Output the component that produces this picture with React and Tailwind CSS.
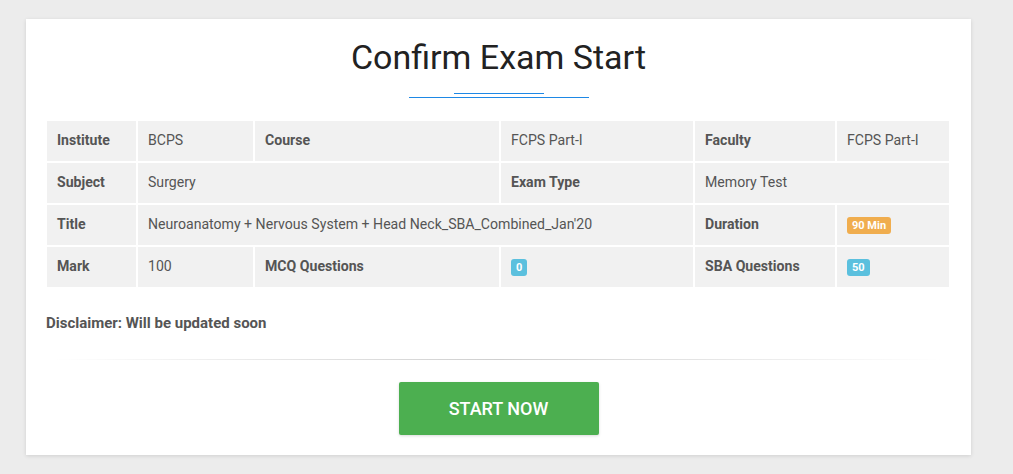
import React from 'react';

const Label = ({ children, ...props }) => (
  <td className="bg-[#f1f1f1] px-[10px] h-[40px] font-bold text-[#555]" {...props}>
    {children}
  </td>
);

const Value = ({ children, ...props }) => (
  <td className="bg-[#f1f1f1] px-[10px] h-[40px] text-[#555]" {...props}>
    {children}
  </td>
);

const Badge = ({ color, children }) => (
  <span className={`inline-block ${color} text-white text-[11px] font-bold leading-[13px] px-[5px] py-[2px] rounded-[3px] align-middle`}>
    {children}
  </span>
);

const App = () => {
  return (
    <div className="min-h-screen bg-[#ececec] pt-[19px] pl-[26px]" style={{ fontFamily: 'Roboto, "Liberation Sans", sans-serif' }}>
      <div className="w-[945px] bg-white shadow-[0_1px_4px_rgba(0,0,0,0.12)] pt-[17px] pb-[20px] px-[19px]">
        {/* Header */}
        <h1 className="text-center text-[34px] leading-[42px] text-[#222]">Confirm Exam Start</h1>
        <div className="flex flex-col items-center mt-[15px]">
          <div className="w-[90px] h-[1px] bg-[#1e88e5]" />
          <div className="w-[180px] h-[1px] bg-[#1e88e5] mt-[3px]" />
        </div>

        {/* Details */}
        <table className="table-fixed border-separate border-spacing-[2px] w-[906px] mt-[21px] text-[14.1px]">
          <colgroup>
            <col className="w-[89px]" />
            <col className="w-[115px]" />
            <col className="w-[244px]" />
            <col className="w-[192px]" />
            <col className="w-[140px]" />
            <col className="w-[112px]" />
          </colgroup>
          <tbody>
            <tr>
              <Label>Institute</Label>
              <Value>BCPS</Value>
              <Label>Course</Label>
              <Value>FCPS Part-I</Value>
              <Label>Faculty</Label>
              <Value>FCPS Part-I</Value>
            </tr>
            <tr>
              <Label>Subject</Label>
              <Value colSpan={2}>Surgery</Value>
              <Label>Exam Type</Label>
              <Value colSpan={2}>Memory Test</Value>
            </tr>
            <tr>
              <Label>Title</Label>
              <Value colSpan={3}>Neuroanatomy + Nervous System + Head Neck_SBA_Combined_Jan'20</Value>
              <Label>Duration</Label>
              <Value><Badge color="bg-[#f0ad4e]">90 Min</Badge></Value>
            </tr>
            <tr>
              <Label>Mark</Label>
              <Value>100</Value>
              <Label>MCQ Questions</Label>
              <Value><Badge color="bg-[#5bc0de]">0</Badge></Value>
              <Label>SBA Questions</Label>
              <Value><Badge color="bg-[#5bc0de]">50</Badge></Value>
            </tr>
          </tbody>
        </table>

        <p className="mt-[24px] pl-px text-[15px] leading-[20px] font-bold text-[#555]">Disclaimer: Will be updated soon</p>

        <div className="mt-[26px] mx-[10px] h-px bg-gradient-to-r from-transparent via-[#cfcfcf] to-transparent" />

        <div className="flex justify-center mt-[22px]">
          <button className="w-[200px] h-[53px] bg-[#4caf50] rounded-[2px] text-white text-[18px] font-medium shadow-[0_1px_3px_rgba(0,0,0,0.15)]">
            START NOW
          </button>
        </div>
      </div>
    </div>
  );
};

export default App;
